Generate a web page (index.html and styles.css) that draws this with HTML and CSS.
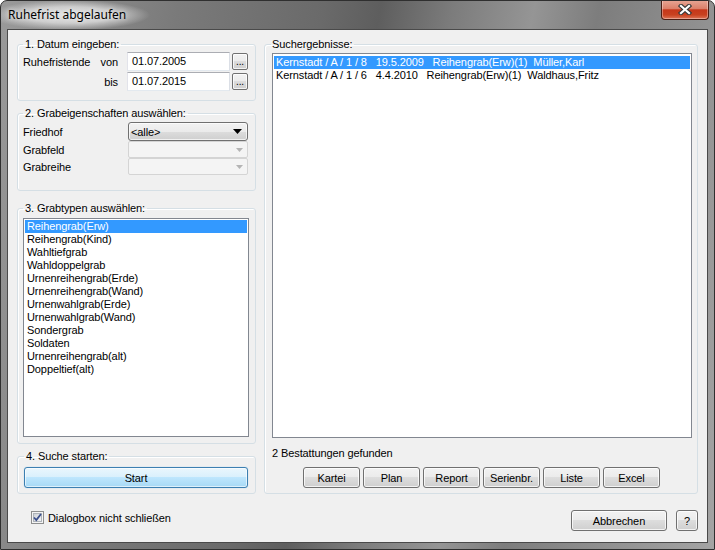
FILE: index.html
```html
<!DOCTYPE html>
<html lang="de">
<head>
    <meta charset="UTF-8">
    <title>Ruhefrist abgelaufen</title>
    <link rel="stylesheet" href="styles.css">
</head>
<body>
    <div class="window">
        <div class="titlebar">
            <span class="title">Ruhefrist abgelaufen</span>
            <div class="close">
                <svg width="14" height="11" viewBox="0 0 14 11">
                    <path d="M3 2 L11 9 M11 2 L3 9" stroke="#3b3b3b" stroke-width="4.4" stroke-linecap="square"/>
                    <path d="M3 2 L11 9 M11 2 L3 9" stroke="#fff" stroke-width="2.2" stroke-linecap="square"/>
                </svg>
            </div>
        </div>

        <div class="client">
            <div class="main">
                <div class="left">
                    <!-- 1. Datum -->
                    <fieldset class="group g-date">
                        <legend>1. Datum eingeben:</legend>
                        <div class="date-grid">
                            <span>Ruhefristende</span>
                            <span class="rlabel">von</span>
                            <div class="textbox">01.07.2005</div>
                            <div class="btn dots">...</div>
                            <span></span>
                            <span class="rlabel">bis</span>
                            <div class="textbox">01.07.2015</div>
                            <div class="btn dots">...</div>
                        </div>
                    </fieldset>

                    <!-- 2. Grabeigenschaften -->
                    <fieldset class="group g-props">
                        <legend>2. Grabeigenschaften auswählen:</legend>
                        <div class="props-grid">
                            <span>Friedhof</span>
                            <div class="combo">
                                <span>&lt;alle&gt;</span>
                                <svg width="9" height="5" viewBox="0 0 9 5"><path d="M0 0 H9 L4.5 5 Z" fill="#000"/></svg>
                            </div>
                            <span>Grabfeld</span>
                            <div class="combo disabled">
                                <span></span>
                                <svg width="7" height="4" viewBox="0 0 7 4"><path d="M0 0 H7 L3.5 4 Z" fill="#b4b4b4"/></svg>
                            </div>
                            <span>Grabreihe</span>
                            <div class="combo disabled">
                                <span></span>
                                <svg width="7" height="4" viewBox="0 0 7 4"><path d="M0 0 H7 L3.5 4 Z" fill="#b4b4b4"/></svg>
                            </div>
                        </div>
                    </fieldset>

                    <!-- 3. Grabtypen -->
                    <fieldset class="group g-types">
                        <legend>3. Grabtypen auswählen:</legend>
                        <div class="listbox types">
                            <div class="item selected">Reihengrab(Erw)</div>
                            <div class="item">Reihengrab(Kind)</div>
                            <div class="item">Wahltiefgrab</div>
                            <div class="item">Wahldoppelgrab</div>
                            <div class="item">Urnenreihengrab(Erde)</div>
                            <div class="item">Urnenreihengrab(Wand)</div>
                            <div class="item">Urnenwahlgrab(Erde)</div>
                            <div class="item">Urnenwahlgrab(Wand)</div>
                            <div class="item">Sondergrab</div>
                            <div class="item">Soldaten</div>
                            <div class="item">Urnenreihengrab(alt)</div>
                            <div class="item">Doppeltief(alt)</div>
                        </div>
                    </fieldset>

                    <!-- 4. Suche -->
                    <fieldset class="group g-start">
                        <legend>4. Suche starten:</legend>
                        <div class="btn start">Start</div>
                    </fieldset>
                </div>

                <fieldset class="group results">
                    <legend>Suchergebnisse:</legend>
                    <div class="listbox hits">
                        <div class="item selected">Kernstadt / A / 1 / 8   19.5.2009   Reihengrab(Erw)(1)  Müller,Karl</div>
                        <div class="item">Kernstadt / A / 1 / 6   4.4.2010   Reihengrab(Erw)(1)  Waldhaus,Fritz</div>
                    </div>
                    <div class="status">2 Bestattungen gefunden</div>
                    <div class="actions">
                        <div class="btn">Kartei</div>
                        <div class="btn">Plan</div>
                        <div class="btn">Report</div>
                        <div class="btn">Serienbr.</div>
                        <div class="btn">Liste</div>
                        <div class="btn">Excel</div>
                    </div>
                </fieldset>
            </div>

            <div class="footer">
                <label class="check">
                    <svg width="13" height="13" viewBox="0 0 13 13">
                        <defs>
                            <linearGradient id="cbg" x1="0" y1="0" x2="1" y2="1">
                                <stop offset="0" stop-color="#cbcfd5"/>
                                <stop offset="1" stop-color="#f6f6f6"/>
                            </linearGradient>
                        </defs>
                        <rect x="0.5" y="0.5" width="12" height="12" fill="#f4f4f4" stroke="#8e8f8f"/>
                        <rect x="2.5" y="2.5" width="8" height="8" fill="url(#cbg)" stroke="#aeb3b9"/>
                        <path d="M3 6.5 L5.3 9 L10 3" fill="none" stroke="#3b4f8c" stroke-width="1.8"/>
                    </svg>
                    <span>Dialogbox nicht schließen</span>
                </label>
                <div class="btn cancel">Abbrechen</div>
                <div class="btn help">?</div>
            </div>
        </div>
    </div>
</body>
</html>
```

FILE: styles.css
```css
body {
    margin: 0;
    background: #fff;
    font-family: "Liberation Sans", Arial, sans-serif;
    font-size: 11px;
    letter-spacing: -0.1px;
    color: #000;
}

/* Window frame */
.window {
    width: 715px;
    height: 550px;
    box-sizing: border-box;
    display: flex;
    flex-direction: column;
    border: 1px solid #2f2f2f;
    border-radius: 7px 7px 0 0;
    background: linear-gradient(100deg, #9a9a9a 0%, #7a7a7a 22%, #6a6a6a 40%, #5e5e5e 47%, #7c7c7c 56%, #959595 66%, #7d7d7d 74%, #8f8f8f 86%, #a4a4a4 100%);
    overflow: hidden;
}

.titlebar {
    height: 28px;
    display: flex;
    align-items: center;
    justify-content: space-between;
}

.title {
    font-family: "Noto Sans", "Open Sans", sans-serif;
    font-size: 12px;
    letter-spacing: 0;
    margin-left: -12px;
    padding: 6px 24px 7px 19px;
    background: radial-gradient(ellipse closest-side, rgba(232,232,232,0.95) 0%, rgba(220,220,220,0.8) 55%, rgba(200,200,200,0) 100%);
    text-shadow: 0 0 5px #f4f4f4;
}

.close {
    align-self: flex-start;
    margin-top: -1px;
    margin-right: 5px;
    width: 48px;
    height: 20px;
    box-sizing: border-box;
    border: 1px solid #4a1e14;
    border-top: none;
    border-radius: 0 0 4px 4px;
    background: linear-gradient(#e8a796 0%, #dc806a 45%, #c6371a 52%, #c9411f 78%, #dd7557 100%);
    box-shadow: inset 0 0 0 1px rgba(255,255,255,0.35);
    display: flex;
    align-items: center;
    justify-content: center;
}

/* Client area */
.client {
    flex: 1;
    margin: 0 6px 6px;
    border: 1px solid #4a4a4a;
    background: #f0f0f0;
    padding: 8px 9px 0 9px;
    display: flex;
    flex-direction: column;
}

.main {
    display: grid;
    grid-template-columns: 239px 434px;
    column-gap: 8px;
}

.left {
    display: flex;
    flex-direction: column;
}

.group {
    margin: 0;
    min-width: 0;
    border: 1px solid #d5dfe5;
    border-radius: 3px;
    box-shadow: inset 1px 1px 0 #fff;
}

.group legend {
    padding: 0 2px;
    line-height: 13px;
}

.g-date {
    padding: 1px 6px 9px 5px;
}

.g-props {
    margin-top: 6px;
    padding: 2px 6px 15px 5px;
}

.g-types {
    margin-top: 11px;
    padding: 3px 6px 6px 5px;
}

.g-start {
    margin-top: 6px;
    padding: 4px 7px 5px 6px;
}

.results {
    padding: 2px 5px 5px 6px;
}

.results legend {
    padding: 0 2px 0 1px;
}

/* Date rows */
.date-grid {
    display: grid;
    grid-template-columns: 75px 29px 103px 18px;
    grid-auto-rows: 19px;
    row-gap: 1px;
    align-items: center;
}

.rlabel {
    text-align: right;
    padding-right: 9px;
}

.textbox {
    height: 19px;
    box-sizing: border-box;
    border: 1px solid;
    border-color: #abadb3 #dbdfe6 #e3e9ef #e2e3ea;
    background: #fff;
    padding-left: 4px;
    line-height: 17px;
}

/* Buttons */
.btn {
    height: 21px;
    box-sizing: border-box;
    border: 1px solid #707070;
    border-radius: 3px;
    background: linear-gradient(#f2f2f2 0%, #ebebeb 50%, #dddddd 50%, #cfcfcf 100%);
    box-shadow: inset 0 0 0 1px rgba(255,255,255,0.75);
    display: flex;
    align-items: center;
    justify-content: center;
}

.dots {
    width: 16px;
    height: 17px;
    justify-self: end;
    align-items: flex-end;
    line-height: 11px;
    border-radius: 2px;
    font-size: 10px;
    padding-bottom: 2px;
}

.start {
    border-color: #3c7fb1;
    background: linear-gradient(#eaf6fd 0%, #d9f0fc 50%, #bee6fd 50%, #a7d9f5 100%);
    box-shadow: inset 0 0 0 1px rgba(255,255,255,0.6), 0 0 1px #7fc4f0;
}

/* Combos */
.props-grid {
    display: grid;
    grid-template-columns: 105px 120px;
    grid-template-rows: 19px 17px 17px;
    align-items: center;
}

.combo {
    height: 100%;
    box-sizing: border-box;
    border: 1px solid #707070;
    border-radius: 3px;
    background: linear-gradient(#f2f2f2 0%, #ebebeb 50%, #dddddd 50%, #cfcfcf 100%);
    box-shadow: inset 0 0 0 1px rgba(255,255,255,0.7);
    display: flex;
    align-items: center;
    justify-content: space-between;
    padding: 0 5px 0 2px;
}

.combo.disabled {
    border-color: #d4d4d4;
    border-radius: 2px;
    background: #f4f4f4;
    box-shadow: none;
    padding-right: 4px;
}

/* List boxes */
.listbox {
    box-sizing: border-box;
    background: #fff;
    border: 1px solid #828790;
    padding: 1px;
}

.types {
    height: 219px;
    width: 226px;
}

.hits {
    height: 385px;
    margin-left: 1px;
    padding-top: 2px;
}

.item {
    line-height: 13px;
    height: 13px;
    padding-left: 2px;
    white-space: pre;
}

.item.selected {
    background: #3399ff;
    color: #fff;
}

.status {
    margin-top: 9px;
    line-height: 13px;
    padding-left: 1px;
}

.actions {
    margin-top: 7px;
    display: flex;
    justify-content: center;
    gap: 3px;
}

.actions .btn {
    width: 57px;
}

/* Footer */
.footer {
    margin-top: 16px;
    display: flex;
    align-items: flex-start;
}

.check {
    display: flex;
    align-items: center;
    gap: 4px;
    margin-left: 14px;
    margin-top: 1px;
    height: 13px;
}

.check svg {
    display: block;
}

.cancel {
    margin-left: auto;
    width: 96px;
}

.help {
    width: 22px;
    margin-left: 9px;
}
```
